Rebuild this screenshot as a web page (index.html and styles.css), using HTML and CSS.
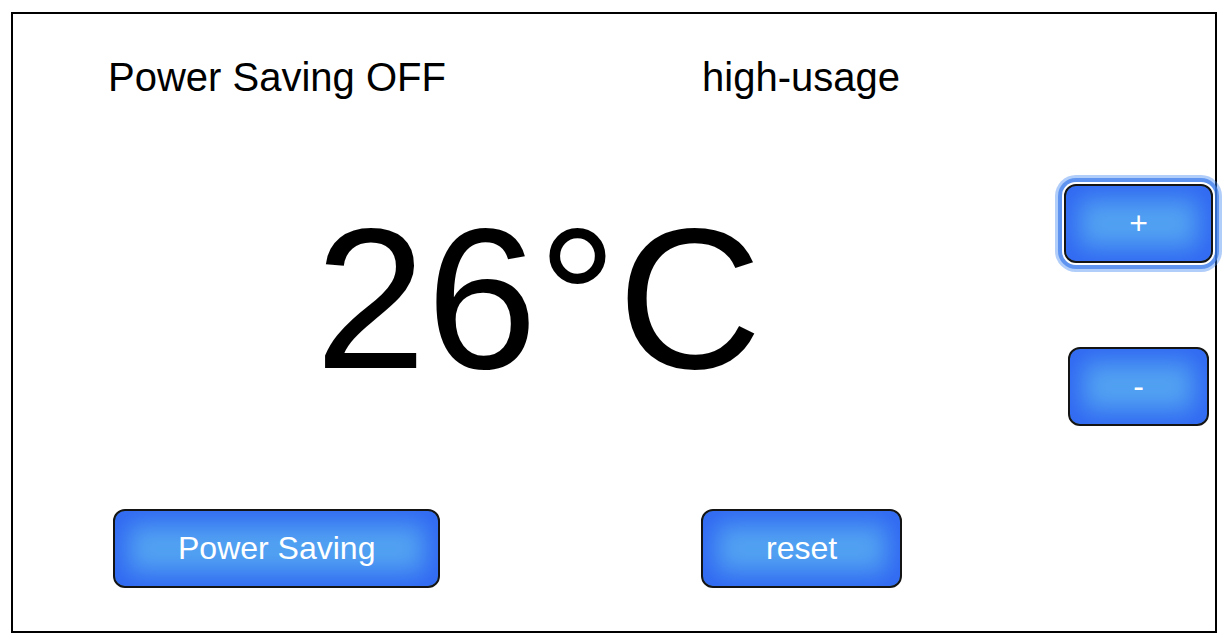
FILE: index.html
```html
<!DOCTYPE html>
<html lang="en">
<head>
<meta charset="utf-8">
<title>Thermostat</title>
<link rel="stylesheet" href="styles.css">
</head>
<body>
<div class="frame">
  <div class="row top">
    <p class="label cell-a">Power Saving OFF</p>
    <p class="label">high-usage</p>
  </div>
  <div class="middle">
    <div class="temp">26°C</div>
    <div class="adjust">
      <button class="btn focused">+</button>
      <button class="btn">-</button>
    </div>
  </div>
  <div class="row bottom">
    <div class="cell-a"><button class="btn">Power Saving</button></div>
    <button class="btn">reset</button>
  </div>
</div>
</body>
</html>
```

FILE: styles.css
```css
html, body {
  margin: 0;
  padding: 0;
  background: #fff;
}

body {
  font-family: "Liberation Sans", Arial, Helvetica, sans-serif;
  color: #000;
}

.frame {
  box-sizing: border-box;
  width: 1206px;
  height: 621px;
  margin: 12px 0 0 11px;
  border: 2px solid #000;
  display: flex;
  flex-direction: column;
}

.row {
  display: flex;
  align-items: flex-start;
  padding-left: 95px;
}

.cell-a {
  width: 594px;
  flex: none;
}

.top {
  padding-top: 43px;
}

.label {
  margin: 0;
  font-size: 40px;
  line-height: 1;
  white-space: nowrap;
}

.middle {
  display: flex;
  justify-content: space-between;
  align-items: flex-start;
  margin-top: 87px;
  padding-left: 302px;
}

.temp {
  margin-top: 15px;
  font-size: 200px;
  line-height: 1;
  white-space: nowrap;
}

.adjust {
  width: 153px;
  display: flex;
  flex-direction: column;
  align-items: center;
  gap: 84px;
}

.bottom {
  margin-top: 83px;
}

.bottom .cell-a {
  padding-left: 5px;
  box-sizing: border-box;
}

.bottom .cell-a + .btn {
  margin-left: -1px;
}

.btn {
  font-family: "Liberation Sans", Arial, Helvetica, sans-serif;
  font-size: 32px;
  line-height: 37px;
  color: #fff;
  padding: 19px 63px;
  margin: 0;
  border: 2px solid #141414;
  border-radius: 12px;
  background: #52a2f2;
  box-shadow: inset 0 0 24px 13px #3068f2;
  white-space: nowrap;
  cursor: pointer;
}

.btn.focused {
  box-shadow: inset 0 0 24px 13px #3068f2,
              0 0 0 2px #fff,
              0 0 0 6px rgba(60, 125, 238, 0.7),
              0 0 0 9px rgba(70, 135, 240, 0.42);
}
```
